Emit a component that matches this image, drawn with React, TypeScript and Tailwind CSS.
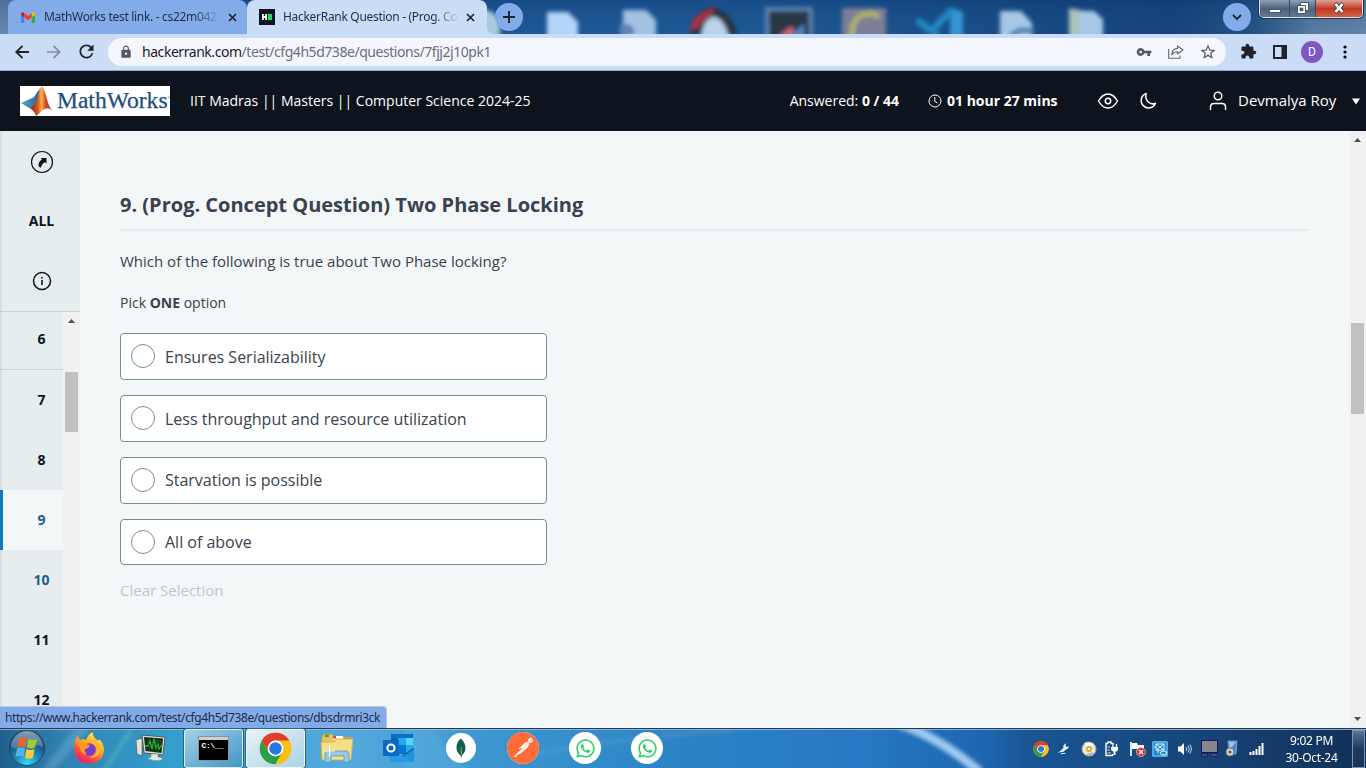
import type { ReactNode } from 'react';
import { FaWhatsapp } from 'react-icons/fa';
import { SiMongodb, SiPostman } from 'react-icons/si';
import { MdVpnKey, MdExtension, MdLock, MdStarBorder, MdRefresh } from 'react-icons/md';

const UI = "font-['Noto_Sans',sans-serif]";

function ChromeLogo({ className }: { className: string }) {
  return (
    <svg className={className} viewBox="0 0 48 48">
      <circle cx="24" cy="24" r="23" fill="#fbc016" />
      <path d="M24 24 L4.1 12.5 A23 23 0 0 1 43.9 12.5 Z" fill="#e33b2e" />
      <path d="M24 12.5 H43.9 A23 23 0 0 0 4.1 12.5 L14 29.7 Z" fill="#e33b2e" />
      <path d="M4.1 12.5 A23 23 0 0 0 24 47 L34 29.7 L14 29.7 Z" fill="#2a9f4b" />
      <path d="M24 47 A23 23 0 0 0 43.9 12.5 H24 L34 29.7 Z" fill="#fbc016" />
      <circle cx="24" cy="24" r="11.5" fill="#fff" />
      <circle cx="24" cy="24" r="9" fill="#2776e8" />
    </svg>
  );
}

function CloseX() {
  return (
    <svg className="h-[9px] w-[9px] shrink-0" viewBox="0 0 9 9">
      <path d="M1 1 L8 8 M8 1 L1 8" stroke="#1c2330" strokeWidth="1.7" />
    </svg>
  );
}

function DesktopStrip() {
  return (
    <svg className="absolute inset-0 h-[34px] w-full" viewBox="0 0 1366 34" preserveAspectRatio="none">
      <defs>
        <linearGradient id="desk">
          <stop offset="0" stopColor="#6f89ab" />
          <stop offset="0.02" stopColor="#6f89ab" />
          <stop offset="0.1" stopColor="#1c5290" />
          <stop offset="0.55" stopColor="#1c5591" />
          <stop offset="0.86" stopColor="#133e74" />
          <stop offset="0.92" stopColor="#24507f" />
          <stop offset="0.96" stopColor="#5d7c9f" />
          <stop offset="1" stopColor="#6b87a6" />
        </linearGradient>
        <linearGradient id="shade" x2="0" y2="1">
          <stop offset="0" stopColor="#0d3a74" stopOpacity="0.35" />
          <stop offset="1" stopColor="#2a6bab" stopOpacity="0.12" />
        </linearGradient>
        <filter id="soft"><feGaussianBlur stdDeviation="2.3" /></filter>
      </defs>
      <rect width="1366" height="34" fill="url(#desk)" />
      <rect width="1366" height="34" fill="url(#shade)" />
      <g filter="url(#soft)">
        <path d="M480 8 L492 12 L500 20 V38 H480Z" fill="#a9cbd9" />
        <path d="M547 12 H568 L578 22 V40 H547Z" fill="#b4d5f9" />
        <path d="M623 10 H646 L656 20 V40 H623Z" fill="#a3c1e2" />
        <path d="M619 26 Q628 20 635 30 L632 36 H620Z" fill="#5f83b6" />
        <path d="M690 34 Q690 14 711 7 Q730 10 738 34Z" fill="#29303f" />
        <path d="M690 30 Q692 14 714 8 L712 15 Q702 18 699 28Z" fill="#a93343" />
        <path d="M701 38 Q703 18 714 17 Q724 18 729 38Z" fill="#b9d3e8" />
        <rect x="765" y="7" width="48" height="32" fill="#5d86b0" />
        <rect x="769" y="11" width="40" height="28" fill="#2a3544" />
        <path d="M778 36 L792 26 L795 36Z" fill="#cc6a75" />
        <path d="M792 34 L804 24 V38Z" fill="#5387c8" />
        <rect x="842" y="8" width="44" height="32" fill="#7b7f94" />
        <path d="M852 38 Q851 14 869 14 Q876 12 878 18" stroke="#b6b760" strokeWidth="5" fill="none" />
        <path d="M950 7 L963 12 V38 H950Z" fill="#3395d5" />
        <path d="M917 20 L938 36 M952 10 L930 32" stroke="#2288c0" strokeWidth="7" />
        <path d="M1000 11 H1021 L1032 23 V38 H1000Z" fill="#a7c7e6" />
        <path d="M1010 38 Q1018 26 1034 32" stroke="#3e77ad" strokeWidth="5" fill="none" />
        <path d="M1069 8 L1085 11 V38 H1069Z" fill="#abc5bd" />
        <path d="M1080 11 H1094 L1103 19 V38 H1080Z" fill="#a6c9e8" />
      </g>
    </svg>
  );
}

function WindowControls() {
  return (
    <div className="absolute top-0 right-[3px] flex h-[18px] w-[104px] overflow-hidden rounded-b-[5px] border border-t-0 border-[#d5dfe9] shadow-[0_0_0_1px_#27384c]">
      <div className="flex w-[30px] justify-center border-r border-[#354860] bg-linear-to-b from-[#91a2b5] via-[#4d637e] to-[#627992] pt-[9px]">
        <div className="h-[4px] w-[12px] border border-[#4d5564] bg-white" />
      </div>
      <div className="flex w-[26px] justify-center border-r border-[#354860] bg-linear-to-b from-[#91a2b5] via-[#4d637e] to-[#627992] pt-[2px]">
        <svg className="h-[12px] w-[12px]" viewBox="0 0 12 12">
          <path d="M3.5 .5H11.5V8.5H3.5Z" fill="#fff" stroke="#4a5263" />
          <path d="M.5 3.5H8.5V11.5H.5Z" fill="#fff" stroke="#4a5263" />
          <rect x="3" y="6" width="3" height="3" fill="#4f6480" stroke="#4a5263" strokeWidth=".6" />
        </svg>
      </div>
      <div className="flex grow justify-center bg-linear-to-b from-[#dca096] via-[#c03724] to-[#d36443] pt-[2px]">
        <svg className="h-[12px] w-[12px]" viewBox="0 0 12 12">
          <path d="M2 1.5 L10 10.5 M10 1.5 L2 10.5" stroke="#4d4655" strokeWidth="4.2" />
          <path d="M2.5 2 L9.5 10 M9.5 2 L2.5 10" stroke="#fff" strokeWidth="2.6" />
        </svg>
      </div>
    </div>
  );
}

function TabStrip() {
  return (
    <div className={`relative h-[34px] overflow-hidden ${UI}`}>
      <DesktopStrip />
      <div className="relative flex h-[34px] pl-[8px]">
        <div className="flex w-[239px] items-center rounded-t-[8px] bg-[#84abe9] pl-[13px]">
          <svg className="h-[11px] w-[14px] shrink-0" viewBox="0 0 14 11">
            <path d="M0 2 V11 H3.2 V4.5Z" fill="#4285f4" />
            <path d="M10.8 4.5 V11 H14 V2Z" fill="#34a853" />
            <path d="M0 1.6 Q1 -.6 3.2 .9 V5.2 L0 3Z" fill="#c5221f" />
            <path d="M3.2 .9 L7 4 L10.8 .9 V5.2 L7 8.2 L3.2 5.2Z" fill="#ea4335" />
            <path d="M10.8 .9 Q13 -.6 14 1.6 V3 L10.8 5.2Z" fill="#fbbc04" />
          </svg>
          <div className="ml-[9px] w-[176px] overflow-hidden bg-linear-to-r from-[#1d2c47] from-85% to-transparent bg-clip-text text-[12px] whitespace-nowrap tracking-[-0.32px] text-transparent">
            MathWorks test link. - cs22m042
          </div>
          <div className="ml-[8px] flex"><CloseX /></div>
        </div>
        <div className="relative flex w-[240px] items-center rounded-t-[8px] bg-[#cbdcf7] pl-[12px]">
          <svg className="h-[16px] w-[16px] shrink-0" viewBox="0 0 16 16">
            <rect width="16" height="16" fill="#0e141e" />
            <path d="M3 5h1.8v2h1.4V5H8v6H6.200V9H4.800v2H3Z" fill="#fff" />
            <rect x="9" y="5" width="4" height="6" fill="#1be064" />
          </svg>
          <div className="ml-[8px] w-[176px] overflow-hidden bg-linear-to-r from-[#1d2c47] from-85% to-transparent bg-clip-text text-[12px] whitespace-nowrap tracking-[-0.3px] text-transparent">
            HackerRank Question - (Prog. Co
          </div>
          <div className="ml-[7px] flex"><CloseX /></div>
          <svg className="absolute -right-[8px] bottom-0 h-[8px] w-[8px]" viewBox="0 0 8 8">
            <path d="M0 0 Q0 8 8 8 H0Z" fill="#cbdcf7" />
          </svg>
        </div>
        <div className="mt-[3px] ml-[8px] flex h-[28px] w-[28px] items-center justify-center rounded-full bg-[#84abe9]">
          <svg className="h-[12px] w-[12px]" viewBox="0 0 12 12"><path d="M6 0V12M0 6H12" stroke="#1b222d" strokeWidth="1.9" /></svg>
        </div>
        <div className="mt-[3px] mr-[115px] ml-auto flex h-[28px] w-[28px] items-center justify-center rounded-full bg-[#84abe9]">
          <svg className="h-[7px] w-[10px]" viewBox="0 0 10 7"><path d="M1 1 L5 5 L9 1" stroke="#1b222d" strokeWidth="1.8" fill="none" /></svg>
        </div>
      </div>
      <WindowControls />
    </div>
  );
}

function Toolbar() {
  return (
    <div className={`flex h-[37px] items-center border-b border-[#93a9c6] bg-[#cbdcf7] pb-0 ${UI}`}>
      <svg className="ml-[15px] h-[14px] w-[14px]" viewBox="0 0 14 14"><path d="M14 7H1.500M7.500 .8L1.300 7L7.500 13.200" stroke="#1f2329" strokeWidth="1.9" fill="none" /></svg>
      <svg className="ml-[18px] h-[14px] w-[14px]" viewBox="0 0 14 14"><path d="M0 7H12.500M6.500 .8L12.700 7L6.500 13.200" stroke="#858c99" strokeWidth="1.7" fill="none" /></svg>
      <MdRefresh className="ml-[15px] h-[21px] w-[21px] text-[#1f2329]" />
      <div className="ml-[11px] flex h-[28px] w-[1118px] shrink-0 items-center rounded-full bg-[#f3f7fd] pr-[9px] pl-[11px]">
        <MdLock className="h-[14px] w-[14px] text-[#565a60]" />
        <div className="ml-[9px] text-[14px] whitespace-nowrap tracking-[-0.45px] text-[#6a6f77]">
          <span className="text-[#1c2026]">hackerrank.com</span>/test/cfg4h5d738e/questions/7fjj2j10pk1
        </div>
        <MdVpnKey className="ml-auto h-[16px] w-[16px] text-[#55595f]" />
        <svg className="ml-[16px] h-[14px] w-[16px]" viewBox="0 0 16 14">
          <path d="M.7 4V13.300H12V10.500" stroke="#606469" strokeWidth="1.100" fill="none" />
          <path d="M9.500 1 L15 5 L9.500 9 V6.700 Q5.500 6.700 3.700 10 Q4 4 9.500 3.400Z" stroke="#606469" strokeWidth="1.100" fill="none" strokeLinejoin="round" />
        </svg>
        <MdStarBorder className="ml-[15px] h-[18px] w-[18px] text-[#55595f]" />
      </div>
      <MdExtension className="ml-[14px] h-[17px] w-[17px] text-[#1f2329]" />
      <svg className="ml-[16px] h-[14px] w-[14px]" viewBox="0 0 14 14"><path d="M1 1H13V13H1Z" stroke="#1f2329" strokeWidth="2" fill="none" /><rect x="8.500" width="5.500" height="14" fill="#1f2329" /></svg>
      <div className="ml-[14px] flex h-[22px] w-[22px] items-center justify-center rounded-full bg-[#8057c2] font-['Roboto',sans-serif] text-[12px] text-white">D</div>
      <svg className="ml-[20px] h-[14px] w-[4px]" viewBox="0 0 4 14"><circle cx="2" cy="2" r="1.600" /><circle cx="2" cy="7" r="1.600" /><circle cx="2" cy="12" r="1.600" /></svg>
    </div>
  );
}

function MathWorksLogo() {
  return (
    <div className="flex h-[30px] w-[150px] shrink-0 overflow-hidden bg-white">
      <svg className="h-[30px] w-[34px] shrink-0" viewBox="0 0 34 30">
        <defs>
          <linearGradient id="peak"><stop offset="0" stopColor="#7f1d18" /><stop offset=".35" stopColor="#dc5a1c" /><stop offset=".5" stopColor="#f9b24e" /><stop offset=".68" stopColor="#d44a1e" /><stop offset="1" stopColor="#8b231a" /></linearGradient>
          <linearGradient id="wing"><stop offset="0" stopColor="#5fa6d6" /><stop offset="1" stopColor="#235c94" /></linearGradient>
        </defs>
        <path d="M1 17 L11 12.500 Q14 12 16 8 L20 2 L16 19 L10 22.500Z" fill="url(#wing)" />
        <path d="M10 22.500 Q15 20 18 10 Q20 1 22 .5 Q24 2 27 13 Q29 22 33 25 Q28 20 23 24 Q20 27 16 30 Q14 24 10 22.500Z" fill="url(#peak)" />
      </svg>
      <div className="ml-[3px] font-['Liberation_Serif',serif] text-[23.500px] leading-[28px] tracking-[0.02px] text-[#1d4d7c] [-webkit-text-stroke:0.25px_#1d4d7c]">MathWorks</div>
      <div className="pt-[9px] font-['Liberation_Serif',serif] text-[4px] leading-[6px] text-[#1d4d7c]">®</div>
    </div>
  );
}

function Header() {
  return (
    <header className="flex h-[60px] items-center bg-[#0e141e] pl-[20px] text-[14px] text-white">
      <MathWorksLogo />
      <div className="ml-[20px] whitespace-nowrap">IIT Madras || Masters || Computer Science 2024-25</div>
      <div className="ml-auto whitespace-nowrap">Answered: <b>0 / 44</b></div>
      <svg className="ml-[29px] h-[14px] w-[14px]" viewBox="0 0 14 14" fill="none" stroke="#fff"><circle cx="7" cy="7" r="6" /><path d="M6.800 3V7.300L9.500 9" /></svg>
      <b className="ml-[5px] w-[111px] whitespace-nowrap">01 hour 27 mins</b>
      <svg className="ml-[39px] h-[16px] w-[22px]" viewBox="0 0 22 16" fill="none" stroke="#fff" strokeWidth="1.500"><path d="M1.500 8Q5.500 1 11 1T20.500 8Q16.500 15 11 15T1.500 8Z" /><circle cx="11" cy="8" r="2.700" /></svg>
      <svg className="ml-[20px] h-[18px] w-[18px]" viewBox="0 0 18 18" fill="none" stroke="#fff" strokeWidth="1.500" strokeLinejoin="round"><path d="M7.200 1.500A7.400 7.400 0 1 0 16.500 11.200Q12.500 13 9.200 10Q5.600 6.300 7.200 1.500Z" /></svg>
      <svg className="ml-[52px] h-[20px] w-[18px]" viewBox="0 0 18 20" fill="none" stroke="#fff" strokeWidth="1.500" strokeLinecap="round"><circle cx="9" cy="5" r="3.800" /><path d="M1.500 18.500V16Q1.500 12.500 5 12.500H13Q16.500 12.500 16.500 16V18.500" /></svg>
      <div className="ml-[11px] w-[100px] text-[15px] whitespace-nowrap">Devmalya Roy</div>
      <svg className="mt-[2px] mr-[6px] ml-[14px] h-[7px] w-[8px]" viewBox="0 0 9 7"><path d="M0 0H9L4.500 7Z" fill="#fff" /></svg>
    </header>
  );
}

const ARROW = { up: 'M0 4 L3.500 0 L7 4Z', down: 'M0 0 L3.500 4 L7 0Z' };

function ScrollArrow({ dir }: { dir: 'up' | 'down' }) {
  return <svg className="h-[4px] w-[7px]" viewBox="0 0 7 4"><path d={ARROW[dir]} fill="#505050" /></svg>;
}

const items = [6, 7, 8, 9, 10, 11, 12];

function Sidebar() {
  return (
    <aside className="flex w-[80px] shrink-0 flex-col overflow-hidden bg-[#e5edef] text-[14px] font-bold text-[#0e141e] shadow-[inset_3px_0_3px_-2px_#ccd5d7]">
      <div className="flex h-[60px] shrink-0 items-center justify-center pt-[2px] pl-[4px]">
        <svg className="h-[24px] w-[24px]" viewBox="0 0 24 24"><circle cx="12" cy="12" r="10.500" fill="none" stroke="#0e141e" strokeWidth="1.200" /><path d="M10.500 8H16.500V13.500L14.800 12.200Q11.500 14 11 17.800Q9 17.500 8.500 15.500Q8.200 11.500 12 9.500Z" fill="#0e141e" /></svg>
      </div>
      <div className="flex h-[60px] shrink-0 items-center justify-center pb-px pl-[3px]">ALL</div>
      <div className="flex h-[61px] shrink-0 items-center justify-center border-b border-[#c9d3d6] pl-[4px]">
        <svg className="h-[20px] w-[20px]" viewBox="0 0 20 20"><circle cx="10" cy="10" r="8.500" fill="none" stroke="#0e141e" strokeWidth="1.500" /><path d="M9.200 9H10.800V14H9.200ZM9.200 6H10.800V7.600H9.200Z" fill="#0e141e" /></svg>
      </div>
      <div className="flex min-h-0 grow">
        <div className="w-[63px] shrink-0">
          {items.map((n) => (
            <div
              key={n}
              className={
                'flex items-center justify-center ' +
                (n === 6 ? 'h-[58px] border-b border-[#cad4d8] pb-[4px] pl-[20px]' : n === 9 ? 'h-[60px] border-l-[3px] border-[#0a7cc0] bg-[#f3f7f7] pb-px pl-[17px] text-[#245b8b]' : n === 10 ? 'h-[60px] pb-px pl-[20px] text-[#245b8b]' : 'h-[60px] pb-px pl-[20px]')
              }
            >
              {n}
            </div>
          ))}
        </div>
        <div className="flex grow flex-col items-center bg-[#f1f1f1] pt-[7px]">
          <ScrollArrow dir="up" />
          <div className="mt-[49px] h-[60px] w-[13px] bg-[#c1c1c1]" />
        </div>
      </div>
    </aside>
  );
}

const options = ['Ensures Serializability', 'Less throughput and resource utilization', 'Starvation is possible', 'All of above'];

function Question() {
  return (
    <main className="grow pt-[60px] pr-[40px] pl-[40px] text-[#39424e]">
      <h1 className="h-[40px] border-b-2 border-[#e7eeef] text-[20px] leading-[28px] font-bold">9. (Prog. Concept Question) Two Phase Locking</h1>
      <p className="mt-[19px] text-[15px] leading-[22px]">Which of the following is true about Two Phase locking?</p>
      <p className="mt-[21px] text-[14px] leading-[20px]">Pick <b>ONE</b> option</p>
      <div className="mt-[20px] flex w-[427px] flex-col gap-[15px]">
        {options.map((o, i) => (
          <div key={o} className={'flex items-center rounded-[4px] border border-[#738f93] bg-white pl-[10px] text-[16px] ' + (i === 3 ? 'h-[46px]' : 'h-[47px]')}>
            <span className="h-[24px] w-[24px] rounded-full border border-[#738f93]" />
            <span className={'ml-[10px] tracking-[-0.01px] ' + (i < 2 ? 'pt-px' : '')}>{o}</span>
          </div>
        ))}
      </div>
      <div className="mt-[14px] text-[15px] leading-[22px] text-[#b7c9cc]">Clear Selection</div>
    </main>
  );
}

function Cell({ children }: { children: ReactNode }) {
  return <div className="flex h-full w-[62px] shrink-0 items-center justify-center">{children}</div>;
}

function TaskbarBackdrop() {
  return (
    <svg className="absolute inset-0 h-full w-full" viewBox="0 0 1366 40" preserveAspectRatio="none">
      <defs>
        <linearGradient id="bar">
          <stop offset="0" stopColor="#1e608d" /><stop offset=".05" stopColor="#3284b4" /><stop offset=".12" stopColor="#329dcc" /><stop offset=".25" stopColor="#55aadd" /><stop offset=".36" stopColor="#3d96cf" /><stop offset=".5" stopColor="#2b83c5" /><stop offset=".63" stopColor="#2679c2" /><stop offset=".725" stopColor="#1c65ae" /><stop offset=".75" stopColor="#1a5595" /><stop offset=".85" stopColor="#17497f" /><stop offset="1" stopColor="#122f57" />
        </linearGradient>
        <filter id="beam"><feGaussianBlur stdDeviation="2" /></filter>
      </defs>
      <rect width="1366" height="40" fill="url(#bar)" />
      <g filter="url(#beam)">
        <path d="M42 42 L75 0 H90 L55 42Z" fill="#8fc3df" opacity=".3" />
        <path d="M105 42 L132 0" stroke="#73d2b2" strokeWidth="3" opacity=".5" />
        <path d="M434 0 Q445 22 469 42 H405 V0Z" fill="#7cc3ea" opacity=".2" />
        <path d="M510 31 Q620 9 735 2" stroke="#86bfe5" strokeWidth="4" fill="none" opacity=".2" />
        <path d="M900 -4 Q940 10 980 44" stroke="#a0cbf1" strokeWidth="9" fill="none" />
      </g>
      <path d="M0 .5H1366" stroke="#26394c" />
      <path d="M0 1.500H1366" stroke="#a2c5e4" opacity=".8" />
    </svg>
  );
}

function StartOrb() {
  return (
    <svg className="h-[38px] w-[38px]" viewBox="0 0 38 38">
      <defs>
        <radialGradient id="orb" cy=".95" r=".8"><stop offset="0" stopColor="#38e0f8" /><stop offset=".45" stopColor="#1d86b9" /><stop offset="1" stopColor="#123f68" /></radialGradient>
        <linearGradient id="gloss" x2="0" y2="1"><stop offset="0" stopColor="#b6c8d4" /><stop offset="1" stopColor="#5c829c" /></linearGradient>
      </defs>
      <circle cx="19" cy="19" r="17.500" fill="url(#orb)" stroke="#194766" />
      <path d="M3 18A16 16 0 0 1 35 18Q28 14 19 19Q9 21 3 18Z" fill="url(#gloss)" opacity=".7" />
      <path d="M11 10Q15 7.500 19 9.500L17.500 18Q13.500 16 9.500 18Z" fill="#ea6325" />
      <path d="M20.500 10Q25 12 29 10L27 18.500Q23 20.500 19 18.500Z" fill="#9bce3c" />
      <path d="M9 19.500Q13 17.500 17 19.500L15.500 28Q11.500 26 7.500 28Z" fill="#55b4ec" />
      <path d="M18.500 20Q22.500 22 26.500 20L25 28.500Q21 31 17 28.500Z" fill="#fcc934" />
    </svg>
  );
}

function Firefox() {
  return (
    <svg className="h-[32px] w-[32px]" viewBox="0 0 32 32">
      <defs><linearGradient id="fox" x1=".8" y1="0" x2=".25" y2="1"><stop offset="0" stopColor="#fff44f" /><stop offset=".4" stopColor="#ffae24" /><stop offset=".7" stopColor="#ff5240" /><stop offset="1" stopColor="#ed1473" /></linearGradient></defs>
      <path d="M1 17Q1 8 5 3.500Q5 6 7 8Q10 6 13 8Q15 2 20 0Q19 4 24 8Q26 9 26 7Q31 12 31 18Q30 31 16 31.500Q2 31 1 17Z" fill="url(#fox)" />
      <circle cx="16.500" cy="17.500" r="6.300" fill="#793bd2" />
      <path d="M4 12Q8 9 13 12L17 13Q15 17 12 17Q11 20 14 22Q8 23 7 16Z" fill="#ff9825" />
      <path d="M17 10Q24 11 24 18Q23 24 16 25Q24 27 27 20Q28 12 21 6Z" fill="#ffb62e" />
    </svg>
  );
}

function MonitorIcon() {
  return (
    <svg className="h-[28px] w-[30px]" viewBox="0 0 30 28">
      <path d="M0 6L6 4V22L1 20Z" fill="#e5e5df" stroke="#555" strokeWidth=".7" />
      <path d="M6 1L29 3L27 21L8 19Z" fill="#d8dad8" stroke="#555b58" />
      <path d="M8 3L27 4.500L25.500 19L9.500 17Z" fill="#102b16" />
      <path d="M9 12L12 12L14 7L16 15L18 5L20 14L22 10L23 15L26 11" fill="none" stroke="#24bd39" strokeWidth="1.300" />
      <path d="M10 7H26M10 10H26M10 13H26M13 4V17M17 4V18M21 4V18" stroke="#2a6d37" strokeWidth=".5" />
      <path d="M15 20H22V23Q28 24 26 26Q19 28 12 25Q13 23 15 23Z" fill="#e7e7e2" stroke="#777" strokeWidth=".5" />
    </svg>
  );
}

function FolderIcon() {
  return (
    <svg className="h-[30px] w-[34px]" viewBox="0 0 34 30">
      <path d="M2 4L4 1H12L14 4H31V26H2Z" fill="#e7c55b" stroke="#bd9942" strokeWidth=".8" />
      <rect x="5" y="1.500" width="4" height="2.500" fill="#36a853" /><rect x="13" y="3" width="10" height="4" fill="#fff" /><rect x="13" y="3" width="3" height="2.500" fill="#d94d3c" /><rect x="24" y="5" width="6" height="3" fill="#599ad7" />
      <path d="M1 9H14L16 6H33L31 27H2Z" fill="#f6de84" stroke="#ccad50" strokeWidth=".8" />
      <path d="M5 29V21Q5 18 8 18H26Q29 18 29 21V29H24V23H11V29Z" fill="#92cbe8" stroke="#6098b6" strokeWidth=".8" />
      <path d="M9.500 12V24M4 18H15" stroke="#fff" strokeWidth="1" />
    </svg>
  );
}

function OutlookIcon() {
  return (
    <svg className="h-[30px] w-[32px]" viewBox="0 0 32 30">
      <rect x="8" y="1" width="22" height="20" fill="#106ebe" />
      <path d="M8 5H15V13H8Z" fill="#0f5ea8" /><path d="M15 5H23V12H15Z" fill="#28a8ea" /><path d="M23 5H30V12H23Z" fill="#50d9ff" /><path d="M15 12H23V20H15Z" fill="#0478d4" /><path d="M23 12H30V20H23Z" fill="#28a8ea" />
      <path d="M6 16L19 23L31 15V29H7Z" fill="#1c93df" /><path d="M6 16L30 29H7Z" fill="#2ba3e6" opacity=".65" />
      <path d="M19 22.500L31 14.500V16L20 23.500Z" fill="#1a5a9e" />
      <rect x="0" y="7" width="16" height="16" rx="1" fill="#0b68c3" />
      <circle cx="8" cy="15" r="3.600" fill="none" stroke="#fff" strokeWidth="2" />
    </svg>
  );
}

function CmdIcon() {
  return (
    <div className="flex h-[25px] w-[31px] flex-col border border-[#8a9298] bg-black">
      <div className="h-[3px] bg-[#c9d0d4]" />
      <div className="pt-[2px] pl-[3px] font-['Liberation_Mono',monospace] text-[8px] leading-[8px] font-bold tracking-[-0.4px] whitespace-nowrap text-white">C:\__</div>
    </div>
  );
}

function Tray() {
  return (
    <div className="ml-auto flex h-full items-center pt-px">
      <ChromeLogo className="h-[16px] w-[16px]" />
      <svg className="ml-[7px] h-[16px] w-[16px]" viewBox="0 0 17 16"><path d="M5 1H12L16 8L12 15H5L1 8Z" fill="#12508c" /><path d="M1.500 12L4.500 10L8 6.500Q7 4.500 9 3L11 2L10 4.500L11.500 6L13.500 5Q13.500 8 10.500 8.500L8 11Z" fill="#e5f0fa" /><path d="M5 13L10 12.500" stroke="#e5f0fa" strokeWidth="1.200" /></svg>
      <svg className="ml-[9px] h-[16px] w-[16px]" viewBox="0 0 16 16"><circle cx="8" cy="8" r="7" fill="#e9ead8" stroke="#a9a991" /><path d="M8 8L3 2Q8 0 12 3Z" fill="#fff" /><circle cx="8" cy="8" r="3" fill="#d6a728" /><circle cx="8" cy="8" r="1.300" fill="#fff" /><path d="M4 14L12 11V15Z" fill="#b1b5ad" /></svg>
      <svg className="ml-[7px] h-[16px] w-[16px]" viewBox="0 0 16 16"><path d="M4 2.500H2V14.500H8.500V13M4 2.500V1H7V2.500H9V3" fill="none" stroke="#fff" strokeWidth="1.400" /><path d="M7 6H14V9Q13 10.500 11.500 10.500V14H9.500V10.500Q7 10 7 8.500Z" fill="#fff" /><path d="M9 3V6M12.500 3V6" stroke="#fff" strokeWidth="1.300" /><path d="M3.500 6H6M3.500 9H6M3.500 12H7" stroke="#fff" strokeWidth=".8" /></svg>
      <svg className="ml-[9px] h-[16px] w-[17px]" viewBox="0 0 17 16"><path d="M2 1V15" stroke="#fff" strokeWidth="1.700" /><path d="M3 2L8 2L9 4L15 4V10H9L8 8H3Z" fill="#fff" /><circle cx="12" cy="11" r="4.500" fill="#d62b30" stroke="#eee" strokeWidth=".6" /><path d="M10 9L14 13M14 9L10 13" stroke="#fff" strokeWidth="1.400" /></svg>
      <svg className="ml-[6px] h-[16px] w-[16px]" viewBox="0 0 16 16"><rect width="16" height="16" rx="1.500" fill="#198bd1" /><path d="M1 1H15V15H1Z" fill="none" stroke="#bdddf0" strokeWidth=".7" /><path d="M4 3H12V9H4ZM4 3L12 9M12 3L4 9M6 9V12M2 6H4" stroke="#fff" fill="none" strokeWidth=".9" /><ellipse cx="11.500" cy="12" rx="3" ry="2" fill="none" stroke="#fff" /></svg>
      <svg className="ml-[9px] h-[14px] w-[16px]" viewBox="0 0 16 14"><path d="M1 4.500H3.500L7 1V13L3.500 9.500H1Z" fill="#fff" /><path d="M9 5Q10.500 7 9 9M11 3.500Q13.500 7 11 10.500M13 2.500Q16 7 13 11.500" stroke="#dce9f5" strokeWidth=".9" fill="none" /></svg>
      <svg className="ml-[8px] h-[17px] w-[17px]" viewBox="0 0 17 17"><rect x=".5" y=".5" width="16" height="12" fill="#85888a" stroke="#15165f" /><path d="M.5 14H6.500V16H.5ZM9.500 14H16.500V16H9.500Z" fill="#7e8184" stroke="#15165f" /></svg>
      <svg className="ml-[6px] h-[17px] w-[16px]" viewBox="0 0 16 17"><path d="M4 1H13L12 14H5Z" fill="#438ed0" stroke="#adb8c3" strokeWidth=".7" /><path d="M5 2H12L6 9Z" fill="#9bc9e9" /><circle cx="6" cy="12" r="4" fill="#d7d5cb" stroke="#7d7b74" /><circle cx="6" cy="12" r="1.500" fill="#58595c" /></svg>
      <svg className="ml-[9px] h-[12px] w-[16px]" viewBox="0 0 16 12"><path d="M1.500 9V12M4.500 8V12M7.500 6V12M10.500 3V12M13.500 0V12" stroke="#fff" strokeWidth="2" /></svg>
      <div className={`w-[87px] pt-px pl-[6px] text-center text-[12px] leading-[17px] tracking-[-0.3px] text-white ${UI}`}><div>9:02 PM</div><div>30-Oct-24</div></div>
      <div className="mr-px h-[38px] w-[13px] border border-[#7995b5] bg-linear-to-b from-[#5c7592] via-[#1d3b60] to-[#1b3452]" />
    </div>
  );
}

function Taskbar() {
  return (
    <div className="relative h-[40px] shrink-0 overflow-hidden">
      <TaskbarBackdrop />
      <div className="relative flex h-full items-center">
        <div className="flex w-[58px] shrink-0 justify-center pr-[4px]"><StartOrb /></div>
        <Cell><Firefox /></Cell>
        <Cell><MonitorIcon /></Cell>
        <Cell><div className="flex h-[39px] w-[59px] items-center justify-center rounded-[3px] border border-[#d6edf9] bg-linear-to-br from-[#a5cfe4] to-[#3c97c7] shadow-[0_0_0_1px_#22638b]"><CmdIcon /></div></Cell>
        <Cell><div className="flex h-[39px] w-[59px] items-center justify-center rounded-[3px] border border-[#eef8fc] bg-linear-to-br from-[#e7f2f7] to-[#abd1e8] shadow-[0_0_0_1px_#2a658d]"><ChromeLogo className="h-[33px] w-[33px]" /></div></Cell>
        <Cell><FolderIcon /></Cell>
        <Cell><OutlookIcon /></Cell>
        <Cell><div className="flex h-[30px] w-[30px] items-center justify-center rounded-full bg-white"><SiMongodb className="h-[20px] w-[20px] text-[#116149]" /></div></Cell>
        <Cell><div className="flex h-[32px] w-[32px] items-center justify-center rounded-full bg-white"><SiPostman className="h-[32px] w-[32px] text-[#ff6c37]" /></div></Cell>
        <Cell><div className="flex h-[32px] w-[32px] items-center justify-center rounded-full bg-white"><FaWhatsapp className="h-[21px] w-[21px] text-[#25d366]" /></div></Cell>
        <Cell><div className="flex h-[32px] w-[32px] items-center justify-center rounded-full bg-white"><FaWhatsapp className="h-[21px] w-[21px] text-[#25d366]" /></div></Cell>
        <Tray />
      </div>
    </div>
  );
}

export default function App() {
  return (
    <div className="flex h-[768px] w-[1366px] flex-col overflow-hidden bg-[#f3f7f8] font-['Open_Sans',sans-serif]">
      <TabStrip />
      <Toolbar />
      <Header />
      <div className="relative flex min-h-0 grow">
        <Sidebar />
        <Question />
        <div className="flex w-[17px] shrink-0 flex-col items-center bg-[#f1f1f1] pt-[7px] pb-[7px]">
          <ScrollArrow dir="up" />
          <div className="mt-[181px] h-[91px] w-[13px] bg-[#c1c1c1]" />
          <div className="mt-auto flex"><ScrollArrow dir="down" /></div>
        </div>
        <div className={`absolute bottom-0 left-0 flex h-[22px] w-[387px] items-center rounded-tr-[4px] border-t border-r border-[#bdc8d8] bg-[#84abe9] pl-[5px] text-[12px] whitespace-nowrap tracking-[-0.41px] text-[#202b41] ${UI}`}>
          https://www.hackerrank.com/test/cfg4h5d738e/questions/dbsdrmri3ck
        </div>
      </div>
      <Taskbar />
    </div>
  );
}
